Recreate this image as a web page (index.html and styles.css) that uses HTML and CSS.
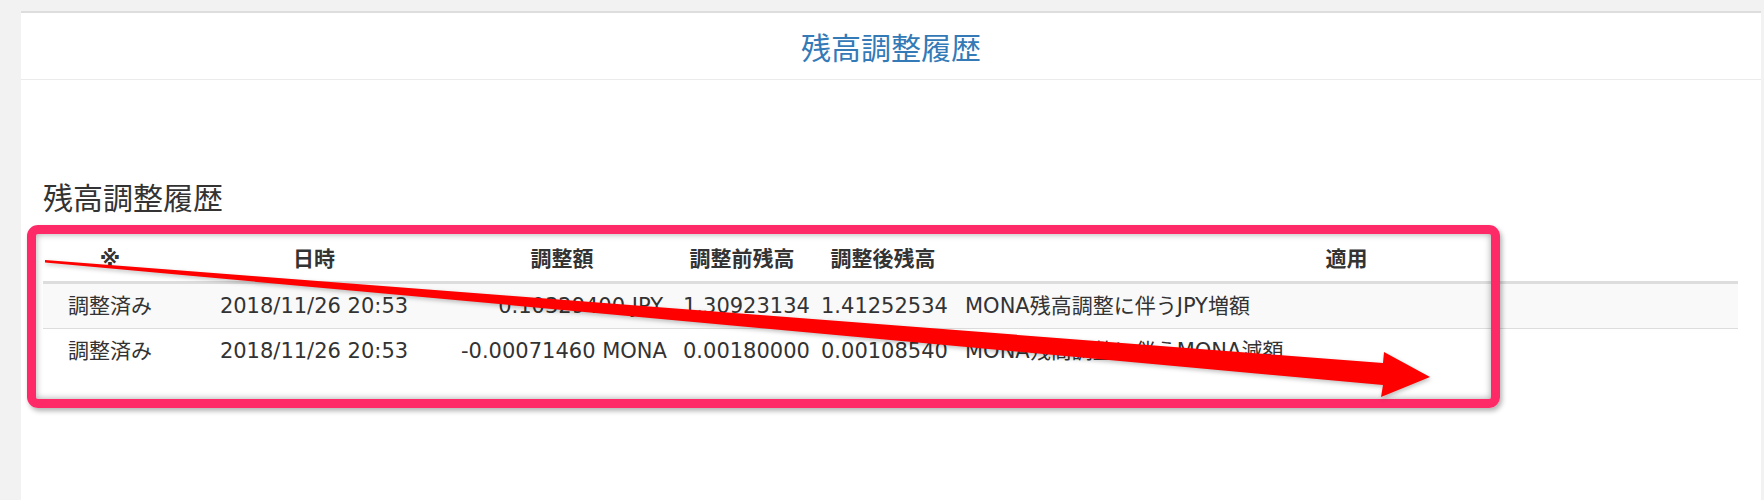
FILE: index.html
```html
<!DOCTYPE html>
<html lang="ja">

<head>
    <meta charset="UTF-8">
    <meta name="viewport" content="width=device-width, initial-scale=1.0">
    <link rel="stylesheet" href="styles.css">
</head>

<body>
    <div class="panel">
        <div class="panel-heading">
            <h2 class="panel-title">残高調整履歴</h2>
        </div>

        <div class="panel-body">
            <h3>残高調整履歴</h3>

            <div class="table-wrap">
                <table class="history">
                    <colgroup>
                        <col class="c-mark">
                        <col class="c-date">
                        <col class="c-amount">
                        <col class="c-before">
                        <col class="c-after">
                        <col class="c-note">
                    </colgroup>
                    <thead>
                        <tr>
                            <th>※</th>
                            <th>日時</th>
                            <th>調整額</th>
                            <th>調整前残高</th>
                            <th>調整後残高</th>
                            <th>適用</th>
                        </tr>
                    </thead>
                    <tbody>
                        <tr class="striped">
                            <td class="center">調整済み</td>
                            <td class="center">2018/11/26 20:53</td>
                            <td class="right">0.10329400 JPY</td>
                            <td>1.30923134</td>
                            <td>1.41252534</td>
                            <td>MONA残高調整に伴うJPY増額</td>
                        </tr>
                        <tr>
                            <td class="center">調整済み</td>
                            <td class="center">2018/11/26 20:53</td>
                            <td class="right">-0.00071460 MONA</td>
                            <td>0.00180000</td>
                            <td>0.00108540</td>
                            <td>MONA残高調整に伴うMONA減額</td>
                        </tr>
                    </tbody>
                </table>

                <!-- annotation frame drawn over the table -->
                <div class="highlight"></div>
            </div>
        </div>
    </div>

    <!-- red annotation arrow -->
    <svg class="arrow" width="1764" height="500" viewBox="0 0 1764 500">
        <polygon points="45,260 1383,363 1384,352 1430,377 1381,397 1383,385 45,262.5" fill="#ff0000"></polygon>
    </svg>
</body>

</html>
```

FILE: styles.css
```css
/* Page background */
body {
    margin: 0;
    padding: 11px 3px 0 21px;
    background: #f2f2f2;
    font-family: "DejaVu Sans", "Noto Sans CJK JP", sans-serif;
    color: #333;
}

/* White panel */
.panel {
    background: #fff;
    border-top: 2px solid #ddd;
    min-height: 487px;
}

.panel-heading {
    height: 66px;
    border-bottom: 1px solid #ebebeb;
    text-align: center;
}

.panel-title {
    margin: 0;
    font-family: "Noto Sans CJK JP", sans-serif;
    font-size: 30px;
    font-weight: normal;
    line-height: 66px;
    color: #337ab7;
}

.panel-body {
    padding: 0 23px 0 22px;
}

h3 {
    margin: 100px 0 24px;
    font-family: "Noto Sans CJK JP", sans-serif;
    font-size: 30px;
    font-weight: normal;
    line-height: 33px;
}

/* Table */
.table-wrap {
    position: relative;
}

.history {
    width: 100%;
    border-collapse: collapse;
    table-layout: fixed;
    font-size: 21px;
    line-height: 24px;
}

.c-mark { width: 134px; }
.c-date { width: 274px; }
.c-amount { width: 222px; }
.c-before { width: 138px; }
.c-after { width: 144px; }

.history th {
    padding: 10px;
    text-align: center;
    font-weight: bold;
    border-bottom: 3px solid #ddd;
}

.history td {
    padding: 10px;
    text-align: left;
    white-space: nowrap;
    border-top: 1px solid #ddd;
}

.history td.center { text-align: center; }
.history td.right { text-align: right; }

.striped { background: #f9f9f9; }

/* Pink frame round the table */
.highlight {
    position: absolute;
    left: -16px;
    top: -12px;
    width: 1473px;
    height: 183px;
    box-sizing: border-box;
    border: 9px solid #fe2a68;
    border-radius: 11px;
    box-shadow: 2px 3px 5px rgba(0, 0, 0, 0.3), inset 0 0 7px rgba(0, 0, 0, 0.35);
}

/* Arrow over everything */
.arrow {
    position: absolute;
    left: 0;
    top: 0;
    pointer-events: none;
    filter: drop-shadow(1px 2px 2px rgba(0, 0, 0, 0.25));
}
```
